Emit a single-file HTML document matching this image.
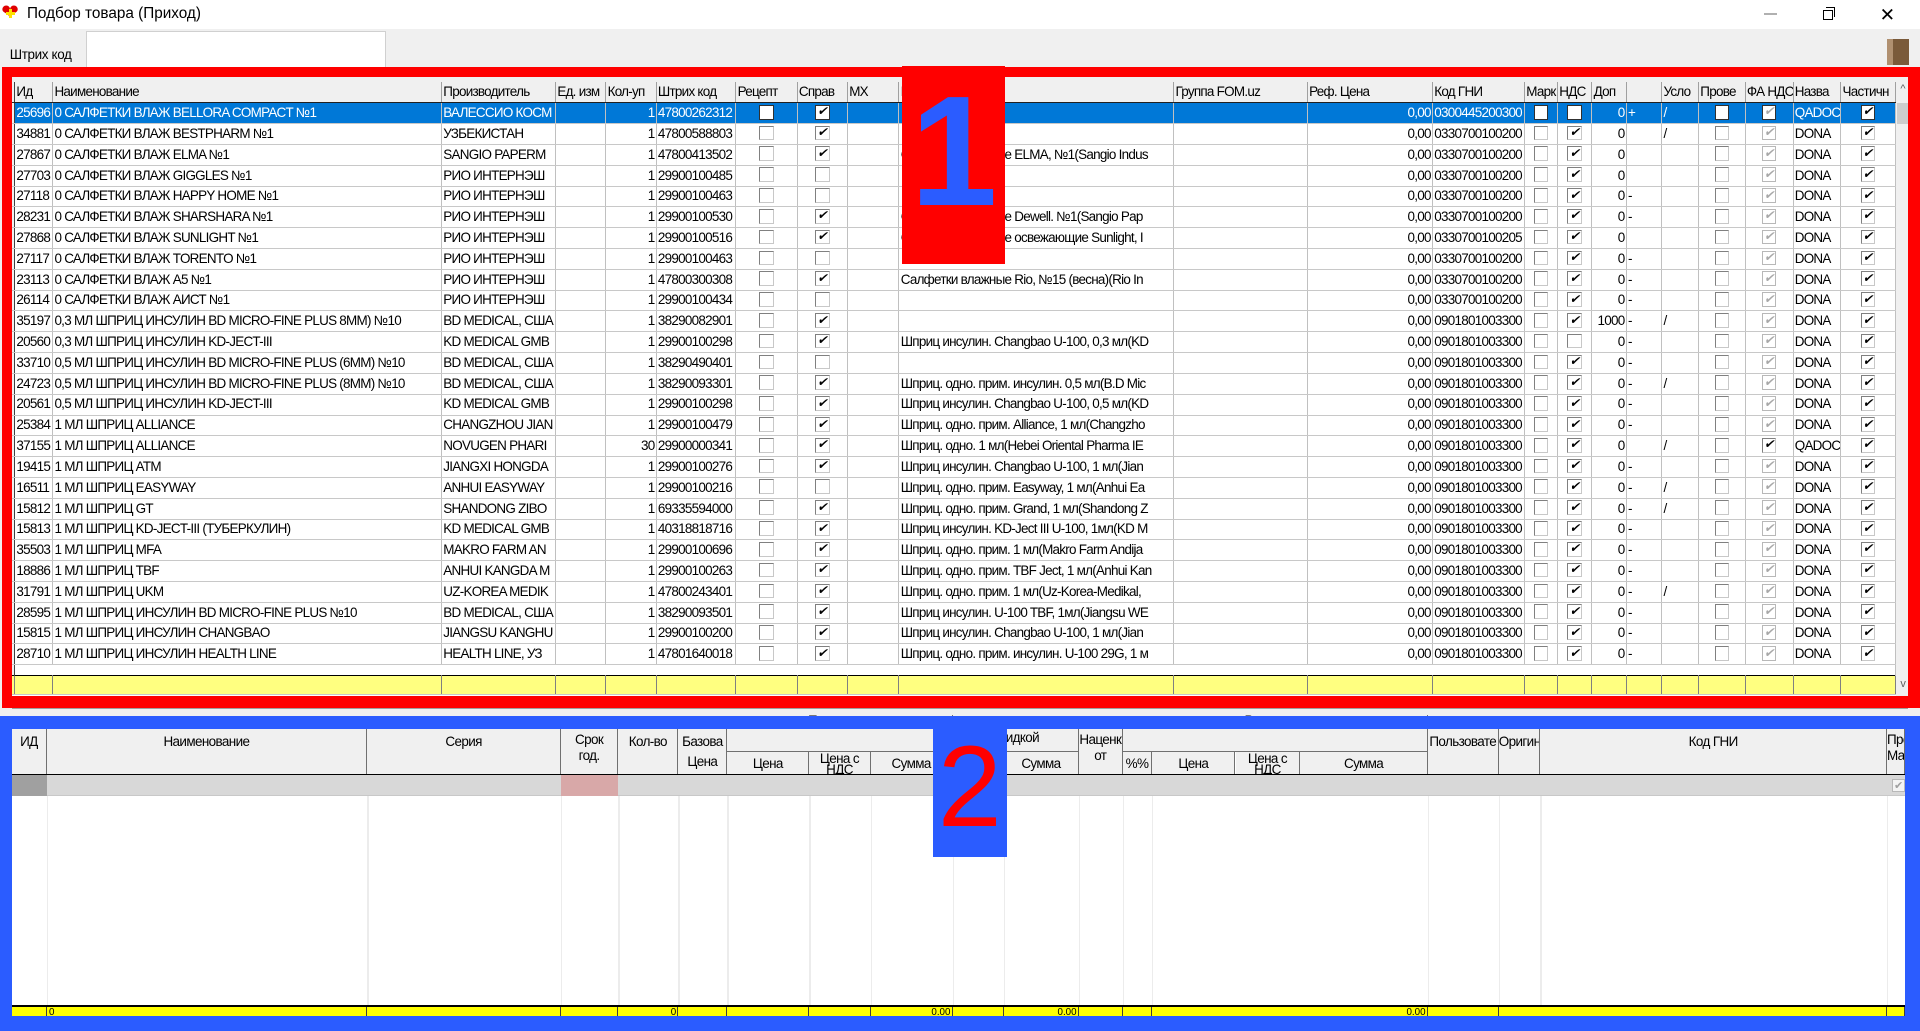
<!DOCTYPE html>
<html><head><meta charset="utf-8">
<style>
*{box-sizing:border-box;margin:0;padding:0}
html,body{width:1920px;height:1030px;overflow:hidden;background:#f0f0f0}
#w{position:absolute;left:0;top:0;width:1568px;height:842px;zoom:1.22449;font-family:"Liberation Sans",Arial,sans-serif;font-size:11px;color:#000;overflow:hidden;background:#f0f0f0}
.a{position:absolute}
#title{left:0;top:0;width:1568px;height:24px;background:#fff}
#title span{position:absolute;left:22px;top:4px;font-size:12.5px}
#g1{left:3px;top:67px;width:1545px;height:501px;background:#fff;overflow:hidden}
table{border-collapse:collapse;table-layout:fixed;letter-spacing:-0.6px}
td,th{height:17px;line-height:15px;border-right:1px solid #c0c0c0;border-bottom:1px solid #c8c8c8;overflow:hidden;white-space:nowrap;padding:0 1px;font-weight:normal;text-align:left}
th{background:#f0f0f0;border-bottom:1px solid #202020;border-right:1px solid #a0a0a0}
td:first-child,th:first-child{background:#f0f0f0;border-right:1px solid #404040;padding:0}
td:nth-child(6),td:nth-child(13),td:nth-child(17){text-align:right}
td:nth-child(8),td:nth-child(9),td:nth-child(15),td:nth-child(16),td:nth-child(20),td:nth-child(21),td:nth-child(23){text-align:center;padding:0}
tr.s td{background:#0078d7;color:#fff}
tr.s td:first-child{background:#f0f0f0}
.c{display:inline-block;width:12px;height:12px;border:1px solid #808080;border-right-color:#c8c8c8;border-bottom-color:#c8c8c8;background:#fff;vertical-align:-2px;position:relative}
.c.k::after,.c.d::after{content:"\2714";position:absolute;left:1px;top:-2px;font-size:10px;color:#000;line-height:14px}
.c.d{border-color:#b8b8b8}
.c.d::after{color:#a8a8a8}
tr.s .c{border:1px solid #303030;background:#fff}
tr.y td{background:#ffff80;border-top:1px solid #000;border-right:1px solid #808080;height:15px}
#sb{left:1548px;top:66px;width:15px;height:502px;background:#f0f0f0}
.red{background:#ff0000}
.blue{background:#2b5cff}
.h2{position:absolute;background:#f0f0f0;border-right:1px solid #707070;border-bottom:1px solid #707070;text-align:center;font-size:11px;letter-spacing:-0.5px;overflow:hidden;white-space:nowrap;line-height:13px}
.vl{position:absolute;top:650px;height:172px;width:1px;background:#ececec}
.ft{position:absolute;top:822px;height:10px;border-right:1px solid #404040;background:#ffff00;font-size:8px;line-height:10px;text-align:right;overflow:hidden;padding-right:1px}
</style></head><body><div id="w">
<div id="title" class="a">
 <div class="a" style="left:1px;top:1px;font-size:17px;color:#e00000;line-height:20px">&#10084;</div>
 <div class="a" style="left:5px;top:10px;width:7px;height:2px;background:#ffe000"></div>
 <div class="a" style="left:7.5px;top:7px;width:2px;height:8px;background:#ffe000"></div>
 <span>Подбор товара (Приход)</span>
 <div class="a" style="left:1441px;top:11px;width:10px;height:1px;background:#b0b0b0"></div>
 <div class="a" style="left:1489px;top:8px;width:8px;height:8px;border:1px solid #000"></div>
 <div class="a" style="left:1491px;top:6px;width:8px;height:8px;border-top:1px solid #000;border-right:1px solid #000"></div>
 <div class="a" style="left:1535px;top:5px;font-size:15px;line-height:14px">&#x2715;</div>
</div>
<div class="a" style="left:8px;top:38px;font-size:11px;letter-spacing:-0.3px">Штрих код</div>
<div class="a" style="left:70px;top:25px;width:245px;height:38px;background:#fff;border:1px solid #d0d0d0"></div>
<div class="a" style="left:1541px;top:32px;width:18px;height:21px;background:#7a5a3a;border-left:5px solid #b09070"></div>

<div id="g1" class="a">
<table style="width:1545px">
<colgroup><col style="width:9px"><col style="width:31px"><col style="width:317px"><col style="width:93px"><col style="width:41px"><col style="width:41px"><col style="width:65px"><col style="width:50px"><col style="width:41px"><col style="width:42px"><col style="width:224px"><col style="width:109px"><col style="width:102px"><col style="width:75px"><col style="width:27px"><col style="width:28px"><col style="width:28px"><col style="width:29px"><col style="width:30px"><col style="width:38px"><col style="width:39px"><col style="width:39px"><col style="width:44px"></colgroup>
<tr><th></th><th>Ид</th><th>Наименование</th><th>Производитель</th><th>Ед. изм</th><th>Кол-уп</th><th>Штрих код</th><th>Рецепт</th><th>Справ</th><th>МХ</th><th>Р</th><th>Группа FOM.uz</th><th>Реф. Цена</th><th>Код ГНИ</th><th>Марк</th><th>НДС</th><th>Доп</th><th></th><th>Усло</th><th>Прове</th><th>ФА НДС</th><th>Назва</th><th>Частичн</th></tr>
<tr class="s"><td></td><td>25696</td><td>0 САЛФЕТКИ ВЛАЖ BELLORA COMPACT №1</td><td>ВАЛЕССИО КОСМ</td><td></td><td>1</td><td>47800262312</td><td><i class="c"></i></td><td><i class="c k"></i></td><td></td><td></td><td></td><td>0,00</td><td>0300445200300</td><td><i class="c"></i></td><td><i class="c"></i></td><td>0</td><td>+</td><td>/</td><td><i class="c"></i></td><td><i class="c d"></i></td><td>QADOC</td><td><i class="c k"></i></td></tr>
<tr><td></td><td>34881</td><td>0 САЛФЕТКИ ВЛАЖ BESTPHARM №1</td><td>УЗБЕКИСТАН</td><td></td><td>1</td><td>47800588803</td><td><i class="c"></i></td><td><i class="c k"></i></td><td></td><td></td><td></td><td>0,00</td><td>0330700100200</td><td><i class="c"></i></td><td><i class="c k"></i></td><td>0</td><td></td><td>/</td><td><i class="c"></i></td><td><i class="c d"></i></td><td>DONA</td><td><i class="c k"></i></td></tr>
<tr><td></td><td>27867</td><td>0 САЛФЕТКИ ВЛАЖ ELMA №1</td><td>SANGIO PAPERM</td><td></td><td>1</td><td>47800413502</td><td><i class="c"></i></td><td><i class="c k"></i></td><td></td><td>Салфетки влажные ELMA, №1(Sangio Indus</td><td></td><td>0,00</td><td>0330700100200</td><td><i class="c"></i></td><td><i class="c k"></i></td><td>0</td><td></td><td></td><td><i class="c"></i></td><td><i class="c d"></i></td><td>DONA</td><td><i class="c k"></i></td></tr>
<tr><td></td><td>27703</td><td>0 САЛФЕТКИ ВЛАЖ GIGGLES №1</td><td>РИО ИНТЕРНЭШ</td><td></td><td>1</td><td>29900100485</td><td><i class="c"></i></td><td><i class="c"></i></td><td></td><td></td><td></td><td>0,00</td><td>0330700100200</td><td><i class="c"></i></td><td><i class="c k"></i></td><td>0</td><td></td><td></td><td><i class="c"></i></td><td><i class="c d"></i></td><td>DONA</td><td><i class="c k"></i></td></tr>
<tr><td></td><td>27118</td><td>0 САЛФЕТКИ ВЛАЖ HAPPY HOME №1</td><td>РИО ИНТЕРНЭШ</td><td></td><td>1</td><td>29900100463</td><td><i class="c"></i></td><td><i class="c"></i></td><td></td><td></td><td></td><td>0,00</td><td>0330700100200</td><td><i class="c"></i></td><td><i class="c k"></i></td><td>0</td><td>-</td><td></td><td><i class="c"></i></td><td><i class="c d"></i></td><td>DONA</td><td><i class="c k"></i></td></tr>
<tr><td></td><td>28231</td><td>0 САЛФЕТКИ ВЛАЖ SHARSHARA №1</td><td>РИО ИНТЕРНЭШ</td><td></td><td>1</td><td>29900100530</td><td><i class="c"></i></td><td><i class="c k"></i></td><td></td><td>Салфетки влажные Dewell. №1(Sangio Pap</td><td></td><td>0,00</td><td>0330700100200</td><td><i class="c"></i></td><td><i class="c k"></i></td><td>0</td><td>-</td><td></td><td><i class="c"></i></td><td><i class="c d"></i></td><td>DONA</td><td><i class="c k"></i></td></tr>
<tr><td></td><td>27868</td><td>0 САЛФЕТКИ ВЛАЖ SUNLIGHT №1</td><td>РИО ИНТЕРНЭШ</td><td></td><td>1</td><td>29900100516</td><td><i class="c"></i></td><td><i class="c k"></i></td><td></td><td>Салфетки влажные освежающие Sunlight, I</td><td></td><td>0,00</td><td>0330700100205</td><td><i class="c"></i></td><td><i class="c k"></i></td><td>0</td><td></td><td></td><td><i class="c"></i></td><td><i class="c d"></i></td><td>DONA</td><td><i class="c k"></i></td></tr>
<tr><td></td><td>27117</td><td>0 САЛФЕТКИ ВЛАЖ TORENTO №1</td><td>РИО ИНТЕРНЭШ</td><td></td><td>1</td><td>29900100463</td><td><i class="c"></i></td><td><i class="c"></i></td><td></td><td></td><td></td><td>0,00</td><td>0330700100200</td><td><i class="c"></i></td><td><i class="c k"></i></td><td>0</td><td>-</td><td></td><td><i class="c"></i></td><td><i class="c d"></i></td><td>DONA</td><td><i class="c k"></i></td></tr>
<tr><td></td><td>23113</td><td>0 САЛФЕТКИ ВЛАЖ А5 №1</td><td>РИО ИНТЕРНЭШ</td><td></td><td>1</td><td>47800300308</td><td><i class="c"></i></td><td><i class="c k"></i></td><td></td><td>Салфетки влажные Rio, №15 (весна)(Rio In</td><td></td><td>0,00</td><td>0330700100200</td><td><i class="c"></i></td><td><i class="c k"></i></td><td>0</td><td>-</td><td></td><td><i class="c"></i></td><td><i class="c d"></i></td><td>DONA</td><td><i class="c k"></i></td></tr>
<tr><td></td><td>26114</td><td>0 САЛФЕТКИ ВЛАЖ АИСТ №1</td><td>РИО ИНТЕРНЭШ</td><td></td><td>1</td><td>29900100434</td><td><i class="c"></i></td><td><i class="c"></i></td><td></td><td></td><td></td><td>0,00</td><td>0330700100200</td><td><i class="c"></i></td><td><i class="c k"></i></td><td>0</td><td>-</td><td></td><td><i class="c"></i></td><td><i class="c d"></i></td><td>DONA</td><td><i class="c k"></i></td></tr>
<tr><td></td><td>35197</td><td>0,3 МЛ ШПРИЦ ИНСУЛИН BD MICRO-FINE PLUS 8MM) №10</td><td>BD MEDICAL, США</td><td></td><td>1</td><td>38290082901</td><td><i class="c"></i></td><td><i class="c k"></i></td><td></td><td></td><td></td><td>0,00</td><td>0901801003300</td><td><i class="c"></i></td><td><i class="c k"></i></td><td>1000</td><td>-</td><td>/</td><td><i class="c"></i></td><td><i class="c d"></i></td><td>DONA</td><td><i class="c k"></i></td></tr>
<tr><td></td><td>20560</td><td>0,3 МЛ ШПРИЦ ИНСУЛИН KD-JECT-III</td><td>KD MEDICAL GMB</td><td></td><td>1</td><td>29900100298</td><td><i class="c"></i></td><td><i class="c k"></i></td><td></td><td>Шприц инсулин. Changbao U-100, 0,3 мл(KD</td><td></td><td>0,00</td><td>0901801003300</td><td><i class="c"></i></td><td><i class="c"></i></td><td>0</td><td>-</td><td></td><td><i class="c"></i></td><td><i class="c d"></i></td><td>DONA</td><td><i class="c k"></i></td></tr>
<tr><td></td><td>33710</td><td>0,5 МЛ ШПРИЦ ИНСУЛИН BD MICRO-FINE PLUS (6MM) №10</td><td>BD MEDICAL, США</td><td></td><td>1</td><td>38290490401</td><td><i class="c"></i></td><td><i class="c"></i></td><td></td><td></td><td></td><td>0,00</td><td>0901801003300</td><td><i class="c"></i></td><td><i class="c k"></i></td><td>0</td><td>-</td><td></td><td><i class="c"></i></td><td><i class="c d"></i></td><td>DONA</td><td><i class="c k"></i></td></tr>
<tr><td></td><td>24723</td><td>0,5 МЛ ШПРИЦ ИНСУЛИН BD MICRO-FINE PLUS (8MM) №10</td><td>BD MEDICAL, США</td><td></td><td>1</td><td>38290093301</td><td><i class="c"></i></td><td><i class="c k"></i></td><td></td><td>Шприц. одно. прим. инсулин. 0,5 мл(B.D Mic</td><td></td><td>0,00</td><td>0901801003300</td><td><i class="c"></i></td><td><i class="c k"></i></td><td>0</td><td>-</td><td>/</td><td><i class="c"></i></td><td><i class="c d"></i></td><td>DONA</td><td><i class="c k"></i></td></tr>
<tr><td></td><td>20561</td><td>0,5 МЛ ШПРИЦ ИНСУЛИН KD-JECT-III</td><td>KD MEDICAL GMB</td><td></td><td>1</td><td>29900100298</td><td><i class="c"></i></td><td><i class="c k"></i></td><td></td><td>Шприц инсулин. Changbao U-100, 0,5 мл(KD</td><td></td><td>0,00</td><td>0901801003300</td><td><i class="c"></i></td><td><i class="c k"></i></td><td>0</td><td>-</td><td></td><td><i class="c"></i></td><td><i class="c d"></i></td><td>DONA</td><td><i class="c k"></i></td></tr>
<tr><td></td><td>25384</td><td>1 МЛ ШПРИЦ ALLIANCE</td><td>CHANGZHOU JIAN</td><td></td><td>1</td><td>29900100479</td><td><i class="c"></i></td><td><i class="c k"></i></td><td></td><td>Шприц. одно. прим. Alliance, 1 мл(Changzho</td><td></td><td>0,00</td><td>0901801003300</td><td><i class="c"></i></td><td><i class="c k"></i></td><td>0</td><td>-</td><td></td><td><i class="c"></i></td><td><i class="c d"></i></td><td>DONA</td><td><i class="c k"></i></td></tr>
<tr><td></td><td>37155</td><td>1 МЛ ШПРИЦ ALLIANCE</td><td>NOVUGEN PHARI</td><td></td><td>30</td><td>29900000341</td><td><i class="c"></i></td><td><i class="c k"></i></td><td></td><td>Шприц. одно. 1 мл(Hebei Oriental Pharma IE</td><td></td><td>0,00</td><td>0901801003300</td><td><i class="c"></i></td><td><i class="c k"></i></td><td>0</td><td></td><td>/</td><td><i class="c"></i></td><td><i class="c k"></i></td><td>QADOC</td><td><i class="c k"></i></td></tr>
<tr><td></td><td>19415</td><td>1 МЛ ШПРИЦ ATM</td><td>JIANGXI HONGDA</td><td></td><td>1</td><td>29900100276</td><td><i class="c"></i></td><td><i class="c k"></i></td><td></td><td>Шприц инсулин. Changbao U-100, 1 мл(Jian</td><td></td><td>0,00</td><td>0901801003300</td><td><i class="c"></i></td><td><i class="c k"></i></td><td>0</td><td>-</td><td></td><td><i class="c"></i></td><td><i class="c d"></i></td><td>DONA</td><td><i class="c k"></i></td></tr>
<tr><td></td><td>16511</td><td>1 МЛ ШПРИЦ EASYWAY</td><td>ANHUI EASYWAY</td><td></td><td>1</td><td>29900100216</td><td><i class="c"></i></td><td><i class="c"></i></td><td></td><td>Шприц. одно. прим. Easyway, 1 мл(Anhui Ea</td><td></td><td>0,00</td><td>0901801003300</td><td><i class="c"></i></td><td><i class="c k"></i></td><td>0</td><td>-</td><td>/</td><td><i class="c"></i></td><td><i class="c d"></i></td><td>DONA</td><td><i class="c k"></i></td></tr>
<tr><td></td><td>15812</td><td>1 МЛ ШПРИЦ GT</td><td>SHANDONG ZIBO</td><td></td><td>1</td><td>69335594000</td><td><i class="c"></i></td><td><i class="c k"></i></td><td></td><td>Шприц. одно. прим. Grand, 1 мл(Shandong Z</td><td></td><td>0,00</td><td>0901801003300</td><td><i class="c"></i></td><td><i class="c k"></i></td><td>0</td><td>-</td><td>/</td><td><i class="c"></i></td><td><i class="c d"></i></td><td>DONA</td><td><i class="c k"></i></td></tr>
<tr><td></td><td>15813</td><td>1 МЛ ШПРИЦ KD-JECT-III (ТУБЕРКУЛИН)</td><td>KD MEDICAL GMB</td><td></td><td>1</td><td>40318818716</td><td><i class="c"></i></td><td><i class="c k"></i></td><td></td><td>Шприц инсулин. KD-Ject III U-100, 1мл(KD M</td><td></td><td>0,00</td><td>0901801003300</td><td><i class="c"></i></td><td><i class="c k"></i></td><td>0</td><td>-</td><td></td><td><i class="c"></i></td><td><i class="c d"></i></td><td>DONA</td><td><i class="c k"></i></td></tr>
<tr><td></td><td>35503</td><td>1 МЛ ШПРИЦ MFA</td><td>MAKRO FARM AN</td><td></td><td>1</td><td>29900100696</td><td><i class="c"></i></td><td><i class="c k"></i></td><td></td><td>Шприц. одно. прим. 1 мл(Makro Farm Andija</td><td></td><td>0,00</td><td>0901801003300</td><td><i class="c"></i></td><td><i class="c k"></i></td><td>0</td><td>-</td><td></td><td><i class="c"></i></td><td><i class="c d"></i></td><td>DONA</td><td><i class="c k"></i></td></tr>
<tr><td></td><td>18886</td><td>1 МЛ ШПРИЦ TBF</td><td>ANHUI KANGDA M</td><td></td><td>1</td><td>29900100263</td><td><i class="c"></i></td><td><i class="c k"></i></td><td></td><td>Шприц. одно. прим. TBF Ject, 1 мл(Anhui Kan</td><td></td><td>0,00</td><td>0901801003300</td><td><i class="c"></i></td><td><i class="c k"></i></td><td>0</td><td>-</td><td></td><td><i class="c"></i></td><td><i class="c d"></i></td><td>DONA</td><td><i class="c k"></i></td></tr>
<tr><td></td><td>31791</td><td>1 МЛ ШПРИЦ UKM</td><td>UZ-KOREA MEDIK</td><td></td><td>1</td><td>47800243401</td><td><i class="c"></i></td><td><i class="c k"></i></td><td></td><td>Шприц. одно. прим. 1 мл(Uz-Korea-Medikal,</td><td></td><td>0,00</td><td>0901801003300</td><td><i class="c"></i></td><td><i class="c k"></i></td><td>0</td><td>-</td><td>/</td><td><i class="c"></i></td><td><i class="c d"></i></td><td>DONA</td><td><i class="c k"></i></td></tr>
<tr><td></td><td>28595</td><td>1 МЛ ШПРИЦ ИНСУЛИН BD MICRO-FINE PLUS №10</td><td>BD MEDICAL, США</td><td></td><td>1</td><td>38290093501</td><td><i class="c"></i></td><td><i class="c k"></i></td><td></td><td>Шприц инсулин. U-100 TBF, 1мл(Jiangsu WE</td><td></td><td>0,00</td><td>0901801003300</td><td><i class="c"></i></td><td><i class="c k"></i></td><td>0</td><td>-</td><td></td><td><i class="c"></i></td><td><i class="c d"></i></td><td>DONA</td><td><i class="c k"></i></td></tr>
<tr><td></td><td>15815</td><td>1 МЛ ШПРИЦ ИНСУЛИН CHANGBAO</td><td>JIANGSU KANGHU</td><td></td><td>1</td><td>29900100200</td><td><i class="c"></i></td><td><i class="c k"></i></td><td></td><td>Шприц инсулин. Changbao U-100, 1 мл(Jian</td><td></td><td>0,00</td><td>0901801003300</td><td><i class="c"></i></td><td><i class="c k"></i></td><td>0</td><td>-</td><td></td><td><i class="c"></i></td><td><i class="c d"></i></td><td>DONA</td><td><i class="c k"></i></td></tr>
<tr><td></td><td>28710</td><td>1 МЛ ШПРИЦ ИНСУЛИН HEALTH LINE</td><td>HEALTH LINE, УЗ</td><td></td><td>1</td><td>47801640018</td><td><i class="c"></i></td><td><i class="c k"></i></td><td></td><td>Шприц. одно. прим. инсулин. U-100 29G, 1 м</td><td></td><td>0,00</td><td>0901801003300</td><td><i class="c"></i></td><td><i class="c k"></i></td><td>0</td><td>-</td><td></td><td><i class="c"></i></td><td><i class="c d"></i></td><td>DONA</td><td><i class="c k"></i></td></tr>
<tr><td style="height:9px;border-bottom:0"></td><td style="height:9px;border-bottom:0" colspan="22"></td></tr>
<tr class="y"><td></td><td></td><td></td><td></td><td></td><td></td><td></td><td></td><td></td><td></td><td></td><td></td><td></td><td></td><td></td><td></td><td></td><td></td><td></td><td></td><td></td><td></td><td></td></tr>
</table>
</div>
<div id="sb" class="a">
 <div class="a" style="left:4px;top:2px;font-size:9px;color:#606060">^</div>
 <div class="a" style="left:1px;top:18px;width:13px;height:17px;background:#cdcdcd"></div>
 <div class="a" style="left:4px;top:488px;font-size:9px;color:#606060">v</div>
</div>

<div class="a" style="left:10px;top:578px;width:1548px;height:12px;background:#f0f0f0;border-top:1px solid #a0a0a0"></div>

<div class="a" style="left:10px;top:595px;width:1546px;height:235px;background:#fff"></div>
<div class="h2" style="left:10px;top:595px;width:28px;height:38px;line-height:22px">ИД</div>
<div class="h2" style="left:38px;top:595px;width:262px;height:38px;line-height:22px">Наименование</div>
<div class="h2" style="left:300px;top:595px;width:158px;height:38px;line-height:22px">Серия</div>
<div class="h2" style="left:458px;top:595px;width:47px;height:38px;padding-top:3px">Срок<br>год.</div>
<div class="h2" style="left:505px;top:595px;width:49px;height:38px;line-height:22px">Кол-во</div>
<div class="h2" style="left:554px;top:595px;width:40px;height:38px;padding-top:3px;line-height:16px">Базова<br>Цена</div>
<div class="h2" style="left:594px;top:584px;width:184px;height:30px;padding-top:0;line-height:10px;border-bottom:1px solid #707070">Приходная</div>
<div class="h2" style="left:594px;top:614px;width:67px;height:19px;line-height:19px">Цена</div>
<div class="h2" style="left:661px;top:614px;width:50px;height:19px;line-height:9px;padding-top:1px">Цена с<br>НДС</div>
<div class="h2" style="left:711px;top:614px;width:67px;height:19px;line-height:19px">Сумма</div>
<div class="h2" style="left:778px;top:595px;width:103px;height:19px;line-height:14px">Скидкой</div>
<div class="h2" style="left:778px;top:614px;width:42px;height:19px"></div>
<div class="h2" style="left:820px;top:614px;width:61px;height:19px;line-height:19px">Сумма</div>
<div class="h2" style="left:881px;top:595px;width:36px;height:38px;padding-top:3px">Наценк<br>от</div>
<div class="h2" style="left:917px;top:584px;width:249px;height:30px;line-height:10px">Розничная</div>
<div class="h2" style="left:917px;top:614px;width:24px;height:19px;line-height:19px">%%</div>
<div class="h2" style="left:941px;top:614px;width:68px;height:19px;line-height:19px">Цена</div>
<div class="h2" style="left:1009px;top:614px;width:53px;height:19px;line-height:9px;padding-top:1px">Цена с<br>НДС</div>
<div class="h2" style="left:1062px;top:614px;width:104px;height:19px;line-height:19px">Сумма</div>
<div class="h2" style="left:1166px;top:595px;width:58px;height:38px;line-height:22px">Пользовате</div>
<div class="h2" style="left:1224px;top:595px;width:34px;height:38px;line-height:22px">Оригин</div>
<div class="h2" style="left:1258px;top:595px;width:283px;height:38px;line-height:22px">Код ГНИ</div>
<div class="h2" style="left:1541px;top:595px;width:15px;height:38px;padding-top:3px;text-align:left">Про<br>Мар</div>
<div class="a" style="left:10px;top:632px;width:1546px;height:1px;background:#000"></div>
<div class="a" style="left:10px;top:633px;width:1546px;height:17px;background:#d8d8d8;border-bottom:1px solid #c8c8c8"></div>
<div class="a" style="left:10px;top:633px;width:28px;height:17px;background:#a0a0a0"></div>
<div class="a" style="left:458px;top:633px;width:47px;height:17px;background:#d8a8a8"></div>
<div class="a" style="left:1545px;top:636px;width:11px;height:11px;border:1px solid #b8b8b8;background:#f4f4f4;font-size:9px;color:#a0a0a0;line-height:10px;text-align:center">&#10004;</div>
<div class="vl" style="left:38px"></div><div class="vl" style="left:300px"></div><div class="vl" style="left:458px"></div><div class="vl" style="left:505px"></div><div class="vl" style="left:554px"></div><div class="vl" style="left:594px"></div><div class="vl" style="left:661px"></div><div class="vl" style="left:711px"></div><div class="vl" style="left:778px"></div><div class="vl" style="left:820px"></div><div class="vl" style="left:881px"></div><div class="vl" style="left:917px"></div><div class="vl" style="left:941px"></div><div class="vl" style="left:1166px"></div><div class="vl" style="left:1224px"></div><div class="vl" style="left:1258px"></div><div class="vl" style="left:1541px"></div>
<div class="a" style="left:10px;top:821px;width:1546px;height:1px;background:#000"></div>
<div class="ft" style="left:10px;width:28px"></div>
<div class="ft" style="left:38px;width:262px;text-align:left;padding-left:2px">0</div>
<div class="ft" style="left:300px;width:158px"></div>
<div class="ft" style="left:458px;width:47px"></div>
<div class="ft" style="left:505px;width:49px">0</div>
<div class="ft" style="left:554px;width:40px"></div>
<div class="ft" style="left:594px;width:67px"></div>
<div class="ft" style="left:661px;width:50px"></div>
<div class="ft" style="left:711px;width:67px">0.00</div>
<div class="ft" style="left:778px;width:42px"></div>
<div class="ft" style="left:820px;width:61px">0.00</div>
<div class="ft" style="left:881px;width:36px"></div>
<div class="ft" style="left:917px;width:24px"></div>
<div class="ft" style="left:941px;width:225px">0.00</div>
<div class="ft" style="left:1166px;width:58px"></div>
<div class="ft" style="left:1224px;width:317px"></div>
<div class="ft" style="left:1541px;width:15px"></div>

<div class="a red" style="left:2px;top:55px;width:1566px;height:8px"></div>
<div class="a red" style="left:2px;top:55px;width:8px;height:523px"></div>
<div class="a red" style="left:1558px;top:55px;width:10px;height:523px"></div>
<div class="a red" style="left:2px;top:568px;width:1566px;height:10px"></div>
<div class="a blue" style="left:0;top:585px;width:1568px;height:10px"></div>
<div class="a blue" style="left:0;top:585px;width:10px;height:257px"></div>
<div class="a blue" style="left:1556px;top:585px;width:12px;height:257px"></div>
<div class="a blue" style="left:0;top:830px;width:1568px;height:12px"></div>

<div class="a red" style="left:737px;top:54px;width:84px;height:162px;overflow:hidden">
 <div class="a" style="left:2px;top:0px;width:80px;text-align:center;font-size:128px;font-weight:bold;color:#2b5cff;line-height:140px">1</div>
</div>
<div class="a blue" style="left:762px;top:590px;width:60px;height:110px;overflow:hidden">
 <div class="a" style="left:0;top:3px;width:60px;text-align:center;font-size:94px;color:#ff0000;line-height:100px">2</div>
</div>
</div></body></html>
